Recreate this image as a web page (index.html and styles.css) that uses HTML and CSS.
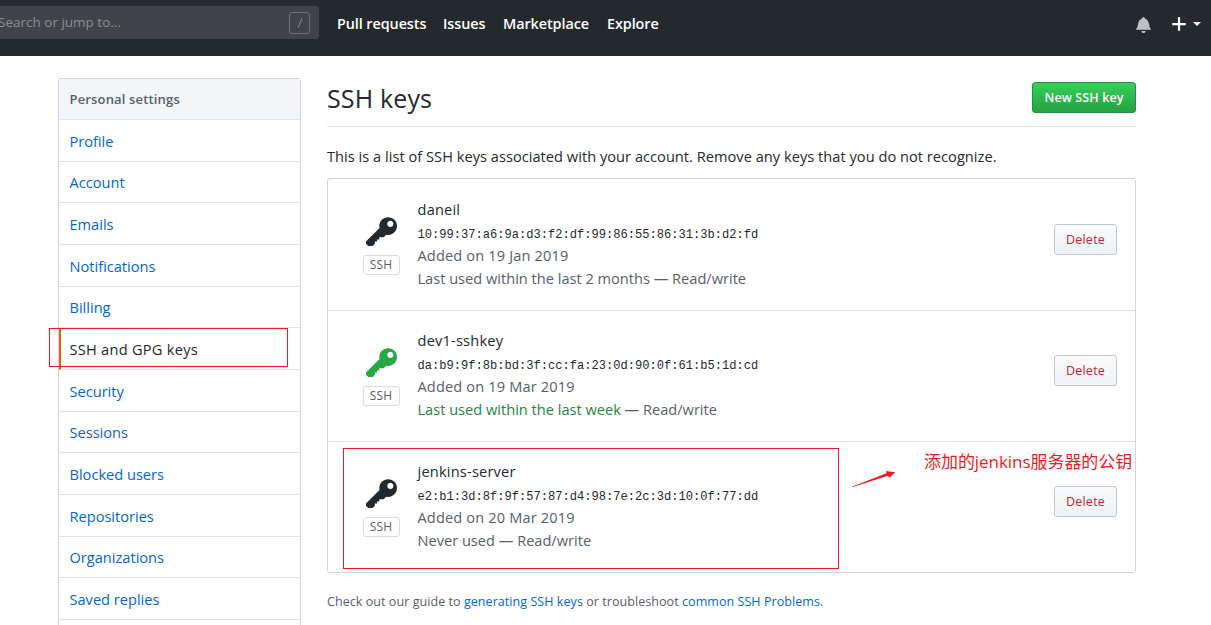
FILE: index.html
```
<!DOCTYPE html>
<html lang="en">
<head>
<meta charset="utf-8">
<title>SSH keys</title>
<link rel="stylesheet" href="styles.css">
</head>
<body>
<svg class="sprite" width="0" height="0">
  <symbol id="key" viewBox="0 0 14 16"><path fill-rule="evenodd" d="M12.83 2.17C12.08 1.42 11.14 1.03 10 1c-1.13.03-2.08.42-2.83 1.17S6.04 3.86 6.01 5c0 .3.03.59.09.89L0 12v1l1 1h2l1-1v-1h1v-1h1v-1h2l1.09-1.11c.3.08.59.11.91.11 1.14-.03 2.08-.42 2.83-1.17S13.97 6.14 14 5c-.03-1.14-.42-2.08-1.17-2.83zM11 5.38c-.77 0-1.38-.61-1.38-1.38 0-.77.61-1.38 1.38-1.38.77 0 1.38.61 1.38 1.38 0 .77-.61 1.38-1.38 1.38z"/></symbol>
</svg>
<header class="topbar">
  <div class="search"><span class="search-text">Search or jump to...</span><span class="slash"><svg width="8" height="12" viewBox="0 0 8 12"><path d="M6 1.500L2 10.500" stroke="#8c9093" fill="none"/></svg></span></div>
  <nav class="nav">
    <a class="n-pulls">Pull requests</a><a class="n-issues">Issues</a><a class="n-market">Marketplace</a><a class="n-explore">Explore</a>
  </nav>
  <div class="tools">
    <svg class="bell" viewBox="0 0 14 16"><path d="M14 12v1H0v-1l.73-.58c.77-.77.81-2.55 1.19-4.42C2.69 3.23 6 2 6 2c0-.55.45-1 1-1s1 .45 1 1c0 0 3.39 1.23 4.16 5 .38 1.88.42 3.66 1.19 4.42l.66.58H14zm-7 4c1.11 0 2-.89 2-2H5c0 1.11.89 2 2 2z"/></svg>
    <svg class="plus" viewBox="0 0 12 16"><path d="M12 9H7v5H5V9H0V7h5V2h2v5h5v2z"/></svg>
    <span class="caret"></span>
  </div>
</header>
<main class="page">
  <aside class="menu">
    <div class="menu-head"><span>Personal settings</span></div>
    <a>Profile</a>
    <a>Account</a>
    <a>Emails</a>
    <a>Notifications</a>
    <a>Billing</a>
    <a class="current">SSH and GPG keys</a>
    <a>Security</a>
    <a>Sessions</a>
    <a>Blocked users</a>
    <a>Repositories</a>
    <a>Organizations</a>
    <a>Saved replies</a>
  </aside>
  <section class="content">
    <div class="heading"><h1>SSH keys</h1><button class="btn primary">New SSH key</button></div>
    <p class="intro">This is a list of SSH keys associated with your account. Remove any keys that you do not recognize.</p>
    <ul class="keys">
      <li>
        <div class="kind"><svg class="key"><use href="#key"/></svg><span class="tag">SSH</span></div>
        <div class="info"><strong>daneil</strong><code>10:99:37:a6:9a:d3:f2:df:99:86:55:86:31:3b:d2:fd</code><span class="added">Added on 19 Jan 2019</span><span>Last used within the last 2 months — Read/write</span></div>
        <button class="btn danger">Delete</button>
      </li>
      <li>
        <div class="kind"><svg class="key recent"><use href="#key"/></svg><span class="tag">SSH</span></div>
        <div class="info"><strong>dev1-sshkey</strong><code>da:b9:9f:8b:bd:3f:cc:fa:23:0d:90:0f:61:b5:1d:cd</code><span class="added">Added on 19 Mar 2019</span><span><em>Last used within the last week</em> — Read/write</span></div>
        <button class="btn danger">Delete</button>
      </li>
      <li>
        <div class="kind"><svg class="key"><use href="#key"/></svg><span class="tag">SSH</span></div>
        <div class="info"><strong>jenkins-server</strong><code>e2:b1:3d:8f:9f:57:87:d4:98:7e:2c:3d:10:0f:77:dd</code><span class="added">Added on 20 Mar 2019</span><span>Never used — Read/write</span></div>
        <button class="btn danger">Delete</button>
      </li>
    </ul>
    <p class="help">Check out our guide to <a>generating SSH keys</a> or troubleshoot <a>common SSH Problems</a>.</p>
  </section>
</main>
<div class="mark mark-menu"></div>
<div class="mark mark-key"></div>
<svg class="arrow" viewBox="0 0 46 20"><path d="M0.800 17.700L35.500 4.200 34.700 2 44.200 3.300 38.300 9 37 6.800 1 18.300z" fill="#ed1c24"/></svg>
<div class="note">添加的jenkins服务器的公钥</div>
</body>
</html>
```
FILE: styles.css
```
* { box-sizing: border-box; }
body {
  margin: 0;
  width: 1211px;
  height: 625px;
  overflow: hidden;
  position: relative;
  background: #fff;
  color: #24292e;
  font: 14.6px/23px "Open Sans", "Noto Sans", sans-serif;
}
a { color: #0366d6; }
.sprite { position: absolute; }

.topbar {
  height: 56px;
  background: #24292e;
  display: flex;
  align-items: flex-start;
}
.search {
  width: 319px;
  height: 33px;
  margin-top: 6px;
  background: #404448;
  border-radius: 0 3px 3px 0;
  display: flex;
  align-items: center;
  justify-content: space-between;
  padding-right: 9px;
}
.search-text {
  margin-left: -2px;
  color: #8c8f92;
  font-size: 13.5px;
}
.slash {
  width: 21px;
  height: 22px;
  border: 1px solid #6d7174;
  border-radius: 3px;
  display: flex;
  align-items: center;
  justify-content: center;
}
.nav {
  display: flex;
  margin: 12px 0 0 18px;
  flex: 1;
}
.nav a {
  color: #fff;
  font-size: 14.4px;
  font-weight: 600;
  letter-spacing: -0.080px;
  white-space: nowrap;
}
.n-pulls { width: 106px; }
.n-issues { width: 60px; }
.n-market { width: 104px; }
.tools {
  display: flex;
  align-items: center;
  height: 18px;
  margin-top: 15px;
  padding-right: 10.500px;
}
.bell { width: 15px; height: 17px; fill: #bebfc1; margin: 1px 21px 0 0; }
.plus { width: 14px; height: 18px; fill: #fff; margin-right: 6.500px; }
.caret {
  border: 4.500px solid transparent;
  border-top-color: #fff;
  border-bottom: 0;
}

.page { display: flex; padding: 22px 0 0 58px; }
.menu {
  width: 243px;
  height: 547px;
  border: 1px solid #d1d5da;
  border-bottom: 0;
  border-radius: 3px 3px 0 0;
  flex: none;
}
.menu > * {
  display: flex;
  align-items: center;
  height: 41.660px;
  padding: 1.600px 0 0 10.500px;
  border-bottom: 1px solid #e1e4e8;
}
.menu .menu-head {
  height: 41px;
  padding-top: 0;
  background: #f3f5f8;
  color: #586069;
  font-size: 13px;
  font-weight: 600;
  letter-spacing: 0.160px;
}
.menu .current {
  color: #24292e;
  font-weight: 500;
  letter-spacing: 0.260px;
  border-left: 2px solid #e36209;
  padding-left: 8.500px;
}

.content { width: 809px; margin-left: 26px; }
.heading {
  height: 49px;
  border-bottom: 1px solid #e1e4e8;
  display: flex;
  justify-content: space-between;
  align-items: flex-start;
}
h1 { margin: 0; font-size: 25px; line-height: 40px; font-weight: 400; letter-spacing: 0.150px; }
.btn {
  height: 31px;
  padding: 0;
  border: 1px solid #c5c9ce;
  border-radius: 3px;
  font: 600 12.500px/20px "Open Sans", "Noto Sans", sans-serif;
}
.primary {
  width: 104px;
  margin-top: 4px;
  color: #fff;
  border-color: #279143;
  background: linear-gradient(#34d058, #28a745 90%);
  letter-spacing: 0.100px;
}
.danger {
  width: 63px;
  margin: 45px 18px 0 auto;
  color: #cb2431;
  background: linear-gradient(#fafbfc, #eff3f6 90%);
  font-weight: 500;
  letter-spacing: 0.250px;
}
.intro { margin: 18px 0 10px; white-space: nowrap; letter-spacing: 0.030px; }
.keys {
  margin: 0;
  padding: 0;
  list-style: none;
  height: 395px;
  border: 1px solid #d1d5da;
  border-radius: 3px;
}
.keys li {
  height: 131px;
  display: flex;
  align-items: flex-start;
}
.keys li + li { border-top: 1px solid #e1e4e8; }
.kind {
  width: 38px;
  margin: 36px 0 0 34px;
  display: flex;
  flex-direction: column;
  align-items: center;
}
.key { width: 31px; height: 35.500px; fill: #24292e; }
.key.recent { fill: #28a745; }
.tag {
  margin-top: 4px;
  width: 37px;
  height: 20px;
  border: 1px solid #d9dcdf;
  border-radius: 3px;
  color: #586069;
  font-size: 12px;
  line-height: 18px;
  text-align: center;
  letter-spacing: 0.200px;
}
.info {
  display: flex;
  flex-direction: column;
  margin: 19px 0 0 17.500px;
  color: #586069;
  white-space: nowrap;
}
.keys li + li .kind { margin-top: 35px; }
.keys li + li .info { margin-top: 18px; }
.keys li + li .danger { margin-top: 44px; }
.info strong { color: #24292e; font-weight: 500; letter-spacing: 0.200px; }
.info code {
  margin: 2px 0 -2px;
  color: #24292e;
  font: 12.080px/24px "Liberation Mono", monospace;
}
.added { margin-top: -1px; letter-spacing: 0.140px; }
.info em { color: #22863a; font-style: normal; }
.help { margin: 17px 0 0; color: #586069; font-size: 12.500px; letter-spacing: 0.060px; white-space: nowrap; }

.mark { position: absolute; border: 1px solid #ed1c24; }
.mark-menu { left: 49px; top: 328px; width: 239px; height: 39px; }
.mark-key { left: 343px; top: 448px; width: 496px; height: 121px; }
.arrow { position: absolute; left: 851px; top: 469px; width: 46px; height: 20px; }
.note {
  position: absolute;
  left: 924px;
  top: 450px;
  color: #ed1c24;
  font: 17px/24px "Open Sans", "Noto Sans CJK SC", sans-serif;
  letter-spacing: -0.050px;
  white-space: nowrap;
}
```
